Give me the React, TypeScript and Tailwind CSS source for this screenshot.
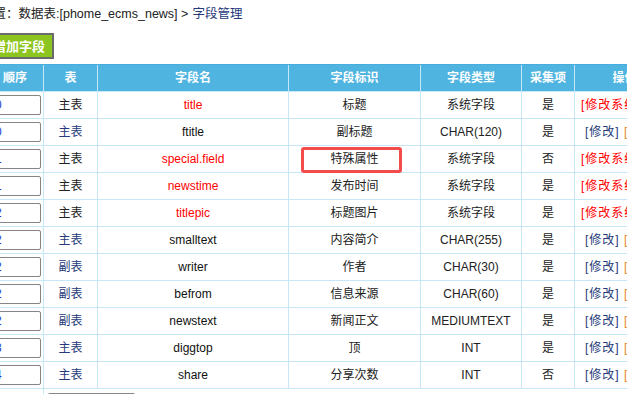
import React from 'react';

type Row = {
  order: string;
  table: string;
  tableLink: boolean;
  name: string;
  sys: boolean;
  label: string;
  type: string;
  collect: string;
};

const rows: Row[] = [
  { order: '0', table: '主表', tableLink: false, name: 'title', sys: true, label: '标题', type: '系统字段', collect: '是' },
  { order: '0', table: '主表', tableLink: true, name: 'ftitle', sys: false, label: '副标题', type: 'CHAR(120)', collect: '是' },
  { order: '1', table: '主表', tableLink: false, name: 'special.field', sys: true, label: '特殊属性', type: '系统字段', collect: '否' },
  { order: '1', table: '主表', tableLink: false, name: 'newstime', sys: true, label: '发布时间', type: '系统字段', collect: '是' },
  { order: '2', table: '主表', tableLink: false, name: 'titlepic', sys: true, label: '标题图片', type: '系统字段', collect: '是' },
  { order: '2', table: '主表', tableLink: true, name: 'smalltext', sys: false, label: '内容简介', type: 'CHAR(255)', collect: '是' },
  { order: '2', table: '副表', tableLink: true, name: 'writer', sys: false, label: '作者', type: 'CHAR(30)', collect: '是' },
  { order: '2', table: '副表', tableLink: true, name: 'befrom', sys: false, label: '信息来源', type: 'CHAR(60)', collect: '是' },
  { order: '2', table: '副表', tableLink: true, name: 'newstext', sys: false, label: '新闻正文', type: 'MEDIUMTEXT', collect: '是' },
  { order: '3', table: '主表', tableLink: true, name: 'diggtop', sys: false, label: '顶', type: 'INT', collect: '是' },
  { order: '4', table: '主表', tableLink: true, name: 'share', sys: false, label: '分享次数', type: 'INT', collect: '否' },
];

const cell = 'flex items-center justify-center border-r border-[#c6e7f7] shrink-0';

export default function App() {
  return (
    <div
      className="w-[627px] h-[394px] overflow-hidden bg-white text-[12px] text-[#222]"
      style={{ fontFamily: '"Liberation Sans", "Noto Sans CJK SC", sans-serif' }}
    >
      <div className="ml-[-19px] h-[28px] flex items-center text-[12.5px] text-[#222]">
        位置：数据表:[phome_ecms_news] &gt; <span className="ml-[4px] text-[#263a7a]">字段管理</span>
      </div>

      <div className="mt-[5px] ml-[-14px] flex">
        <button className="h-[26px] px-[7px] bg-[#8cc51f] border-t-2 border-r-2 border-b-2 border-[#6b6b6b] text-white font-bold text-[13px] leading-none">
          增加字段
        </button>
      </div>

      <div className="relative mt-[5px] ml-[-13px] w-[800px] border-t border-[#47ade0]">
        <div className="flex h-[27px] bg-[#50b4e0] border-b border-[#c6e7f7] text-white font-bold">
          <div className={`${cell} w-[57px]`}>顺序</div>
          <div className={`${cell} w-[54px]`}>表</div>
          <div className={`${cell} w-[191px]`}>字段名</div>
          <div className={`${cell} w-[132px]`}>字段标识</div>
          <div className={`${cell} w-[101px]`}>字段类型</div>
          <div className={`${cell} w-[53px]`}>采集项</div>
          <div className={`${cell} w-[100px]`}>操作</div>
        </div>

        {rows.map((r, i) => (
          <div key={i} className="flex h-[27px] border-b border-[#c6e7f7]">
            <div className={`${cell} w-[57px] justify-start`}>
              <div className="ml-[3px] w-[51px] h-[20px] border border-[#858585] rounded-[2px] flex items-center pl-[4px] text-[#1a3ccf]">
                {r.order}
              </div>
            </div>
            <div className={`${cell} w-[54px] ${r.tableLink ? 'text-[#263a7a]' : 'text-[#222]'}`}>{r.table}</div>
            <div className={`${cell} w-[191px] ${r.sys ? 'text-[#ff0000]' : 'text-[#111]'}`}>{r.name}</div>
            <div className={`${cell} w-[132px]`}>{r.label}</div>
            <div className={`${cell} w-[101px]`}>{r.type}</div>
            <div className={`${cell} w-[53px]`}>{r.collect}</div>
            <div className={`${cell} w-[100px] justify-start whitespace-nowrap tracking-[1px] ${r.sys ? 'pl-[6px]' : 'pl-[10px]'}`}>
              {r.sys ? (
                <span className="text-[#ff0000]">[修改系统字段]</span>
              ) : (
                <span className="text-[#263a7a]">
                  [修改]&nbsp;<span className="text-[#e8871e]">[删除]</span>
                </span>
              )}
            </div>
          </div>
        ))}

        <div className="flex h-[27px]">
          <div className={`${cell} w-[57px]`}></div>
          <div className="flex items-start pl-[3px] pt-[4px]">
            <div className="w-[89px] h-[20px] border border-[#858585] rounded-[3px] bg-[#f2f2f2]"></div>
          </div>
        </div>

        <div className="absolute left-[314px] top-[82px] w-[101px] h-[26px] border-[3px] border-[#f24c4c] rounded-[3px]"></div>
      </div>
    </div>
  );
}
